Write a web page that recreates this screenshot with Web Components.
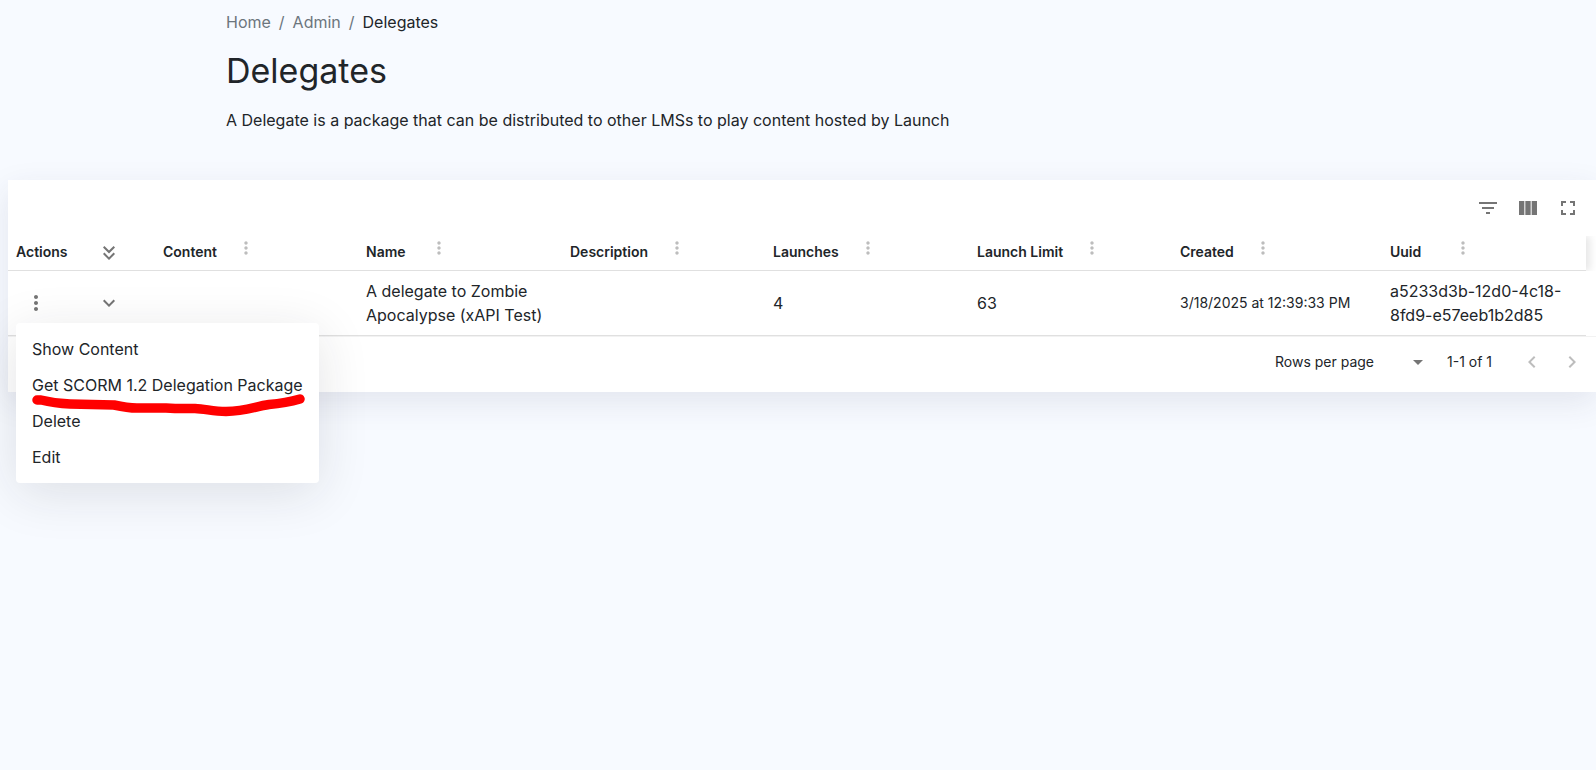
<!DOCTYPE html>
<html lang="en">
<head>
<meta charset="utf-8">
<meta name="viewport" content="width=device-width, initial-scale=1">
<title>Delegates</title>
<style>
  html { background: #fff; }
  body {
    margin: 0;
    font-family: Inter, "Liberation Sans", sans-serif;
    font-size: 16px;
    line-height: 24px;
    color: #212529;
    overflow-x: hidden;
  }
</style>
</head>
<body>
<delegates-page></delegates-page>

<script>
const define = (name, html, setup) => {
  const template = document.createElement('template');
  template.innerHTML = html;
  customElements.define(name, class extends HTMLElement {
    constructor() {
      super();
      this.attachShadow({ mode: 'open' }).append(template.content.cloneNode(true));
    }
    connectedCallback() {
      if (setup) setup(this, this.shadowRoot);
    }
  });
};

const ICONS = {
  filter: 'M10 18h4v-2h-4v2zM3 6v2h18V6H3zm3 7h12v-2H6v2z',
  fullscreen: 'M7 14H5v5h5v-2H7v-3zm-2-4h2V7h3V5H5v5zm12 7h-3v2h5v-5h-2v3zM14 5v2h3v3h2V5h-5z',
  more: 'M12 8c1.1 0 2-.9 2-2s-.9-2-2-2-2 .9-2 2 .9 2 2 2zm0 2c-1.100 0-2 .9-2 2s.9 2 2 2 2-.9 2-2-.9-2-2-2zm0 6c-1.100 0-2 .9-2 2s.9 2 2 2 2-.9 2-2-.9-2-2-2z',
  expand: 'M16.590 8.590 12 13.170 7.410 8.590 6 10l6 6 6-6z',
  expandAll: 'M18 6.410 16.590 5 12 9.580 7.410 5 6 6.410l6 6zM18 13l-1.410-1.410L12 16.170l-4.590-4.580L6 13l6 6z',
  prev: 'M15.410 7.410 14 6l-6 6 6 6 1.410-1.410L10.830 12z',
  next: 'M10 6 8.590 7.410 13.170 12l-4.580 4.590L10 18l6-6z',
  columns: 'M3 5h5.330v14H3zM9.330 5h5.340v14H9.330zM15.670 5H21v14h-5.330z'
};

/* Icon-only button. Attributes: icon, label, size (box), glyph (drawing), disabled. */
define('icon-button', `
  <style>
    :host { display: flex; color: #757575; }
    button {
      display: flex; align-items: center; justify-content: center;
      margin: 0; padding: 0; border: 0; border-radius: 50%;
      background: none; color: inherit; cursor: pointer;
    }
    svg { display: block; fill: currentColor; }
  </style>
  <button type="button"><svg viewBox="0 0 24 24" aria-hidden="true"><path></path></svg></button>
`, (host, root) => {
  const size = host.getAttribute('size') || '40';
  const glyph = host.getAttribute('glyph') || '24';
  const button = root.querySelector('button');
  const svg = root.querySelector('svg');
  button.style.width = button.style.height = size + 'px';
  button.setAttribute('aria-label', host.getAttribute('label') || '');
  button.disabled = host.hasAttribute('disabled');
  svg.setAttribute('width', glyph);
  svg.setAttribute('height', glyph);
  root.querySelector('path').setAttribute('d', ICONS[host.getAttribute('icon')]);
});

define('bread-crumbs', `
  <style>
    :host { display: block; }
    nav { display: flex; gap: 8px; color: #6c757d; }
    ::slotted(a) { color: #6c757d; text-decoration: none; }
    ::slotted([aria-current]) { color: #212529; }
  </style>
  <nav aria-label="Breadcrumb"><slot></slot></nav>
`);

define('page-intro', `
  <style>
    :host { display: block; }
    h1 { margin: 16px 0; font-size: 34px; line-height: 42px; font-weight: 400; }
    p { margin: 0; }
  </style>
  <h1><slot name="title"></slot></h1>
  <p><slot></slot></p>
`);

define('menu-item', `
  <style>
    :host { display: block; }
    button {
      display: block; width: 100%; margin: 0; padding: 6px 16px; border: 0;
      background: none; color: inherit; font: inherit; text-align: left;
      white-space: nowrap; cursor: pointer;
    }
  </style>
  <button type="button" role="menuitem"><slot></slot></button>
`);

define('action-menu', `
  <style>
    :host {
      display: block; padding: 8px 0; border-radius: 4px; background: #fff;
      box-shadow: 0 10px 52px rgba(33, 37, 41, .12);
    }
    .stroke { position: absolute; left: 16px; top: 69px; pointer-events: none; }
  </style>
  <div role="menu" aria-label="Row actions"><slot></slot></div>
  <svg class="stroke" width="274" height="26" viewBox="0 0 274 26" fill="none" stroke="#f00"
       stroke-width="9.500" stroke-linecap="round" stroke-linejoin="round" aria-hidden="true">
    <path d="M5 8H9C17 10 26 11.500 38 12L82 13C91 15 96 16 105 16H134L143 16.500H163C174 17 181 19.500 194 19.500C214 19.500 223 14.500 237 12.500C250 11.500 258 10 268 7"/>
  </svg>
`);

define('column-head', `
  <style>
    :host { display: flex; align-items: center; }
    span { min-width: 44px; white-space: nowrap; }
    icon-button { color: #bdbdbd; margin: -8px 0 0 15px; }
  </style>
  <span><slot></slot></span>
  <icon-button icon="more" size="28" glyph="20" label="Column actions"></icon-button>
`);

define('table-toolbar', `
  <style>
    :host { display: flex; justify-content: flex-end; padding: 8px; }
  </style>
  <icon-button icon="filter" label="Show filters"></icon-button>
  <icon-button icon="columns" label="Show columns"></icon-button>
  <icon-button icon="fullscreen" label="Full screen"></icon-button>
`);

define('table-pager', `
  <style>
    :host {
      display: flex; align-items: center; justify-content: flex-end;
      padding: 5px 4px 10px 0; font-size: 14px; line-height: 20px;
      border-top: 1px solid #f2f2f2;
    }
    .field { position: relative; display: flex; align-items: center; }
    select {
      appearance: none; width: 48px; height: 24px; margin: 0 0 0 8px; padding: 0;
      border: 0; background: none; font: inherit; color: inherit;
    }
    .field svg { position: absolute; right: 0; fill: #757575; pointer-events: none; }
    .range { margin: 0 20px 0 17px; }
    icon-button { color: #bdbdbd; }
  </style>
  <label for="rows">Rows per page</label>
  <div class="field">
    <select id="rows"><option value="" selected></option></select>
    <svg width="24" height="24" viewBox="0 0 24 24" aria-hidden="true"><path d="m7 10 5 5 5-5z"/></svg>
  </div>
  <span class="range">1-1 of 1</span>
  <icon-button icon="prev" label="Previous page" disabled></icon-button>
  <icon-button icon="next" label="Next page" disabled></icon-button>
`);

define('delegates-table', `
  <style>
    :host {
      display: block; background: #fff;
      box-shadow: 0 10px 30px rgba(50, 50, 90, .1);
    }
    .scroller { padding-right: 10px; }
    table { width: 100%; table-layout: fixed; border-collapse: separate; border-spacing: 0; }
    th, td { box-sizing: border-box; padding: 0 8px; text-align: left; border-bottom: 1px solid #e0e0e0; }
    th { height: 35px; padding-bottom: 3px; font-size: 14px; line-height: 20px; font-weight: 600; }
    th:last-child { box-shadow: 4px 0 8px rgba(0, 0, 0, .1); clip-path: inset(0 -10px 0 0); }
    td { height: 65px; overflow-wrap: break-word; }
    .icon { padding: 0 12px; }
    .small { font-size: 14px; white-space: nowrap; }
    .anchor { position: relative; display: flex; }
    action-menu { position: absolute; z-index: 1; top: 40px; left: 0; }
  </style>
  <table-toolbar></table-toolbar>
  <div class="scroller">
    <table>
      <colgroup>
        <col style="width:75px"><col style="width:72px"><col style="width:203px">
        <col style="width:204px"><col style="width:203px"><col style="width:204px">
        <col style="width:203px"><col style="width:210px"><col style="width:204px">
      </colgroup>
      <thead>
        <tr>
          <th scope="col">Actions</th>
          <th scope="col" class="icon"><icon-button icon="expandAll" size="28" glyph="24" label="Expand all"></icon-button></th>
          <th scope="col"><column-head>Content</column-head></th>
          <th scope="col"><column-head>Name</column-head></th>
          <th scope="col"><column-head>Description</column-head></th>
          <th scope="col"><column-head>Launches</column-head></th>
          <th scope="col"><column-head>Launch Limit</column-head></th>
          <th scope="col"><column-head>Created</column-head></th>
          <th scope="col"><column-head>Uuid</column-head></th>
        </tr>
      </thead>
      <tbody>
        <tr>
          <td>
            <div class="anchor">
              <icon-button icon="more" size="40" glyph="24" label="Row actions"></icon-button>
              <action-menu>
                <menu-item>Show Content</menu-item>
                <menu-item>Get SCORM 1.2 Delegation Package</menu-item>
                <menu-item>Delete</menu-item>
                <menu-item>Edit</menu-item>
              </action-menu>
            </div>
          </td>
          <td class="icon"><icon-button icon="expand" size="28" glyph="24" label="Expand"></icon-button></td>
          <td></td>
          <td>A delegate to Zombie Apocalypse (xAPI Test)</td>
          <td></td>
          <td>4</td>
          <td>63</td>
          <td class="small">3/18/2025 at 12:39:33 PM</td>
          <td>a5233d3b-12d0-4c18-8fd9-e57eeb1b2d85</td>
        </tr>
      </tbody>
    </table>
  </div>
  <table-pager></table-pager>
`);

define('delegates-page', `
  <style>
    :host { display: block; min-height: calc(100vh - 12px); background: #f7faff; }
    header { max-width: 1144px; margin: 0 auto; padding: 10px 0 48px; }
    main { padding-left: 8px; }
  </style>
  <header>
    <bread-crumbs>
      <a href="#home">Home</a><span>/</span><a href="#admin">Admin</a><span>/</span><span aria-current="page">Delegates</span>
    </bread-crumbs>
    <page-intro>
      <span slot="title">Delegates</span>
      A Delegate is a package that can be distributed to other LMSs to play content hosted by Launch
    </page-intro>
  </header>
  <main><delegates-table></delegates-table></main>
`);
</script>
</body>
</html>
